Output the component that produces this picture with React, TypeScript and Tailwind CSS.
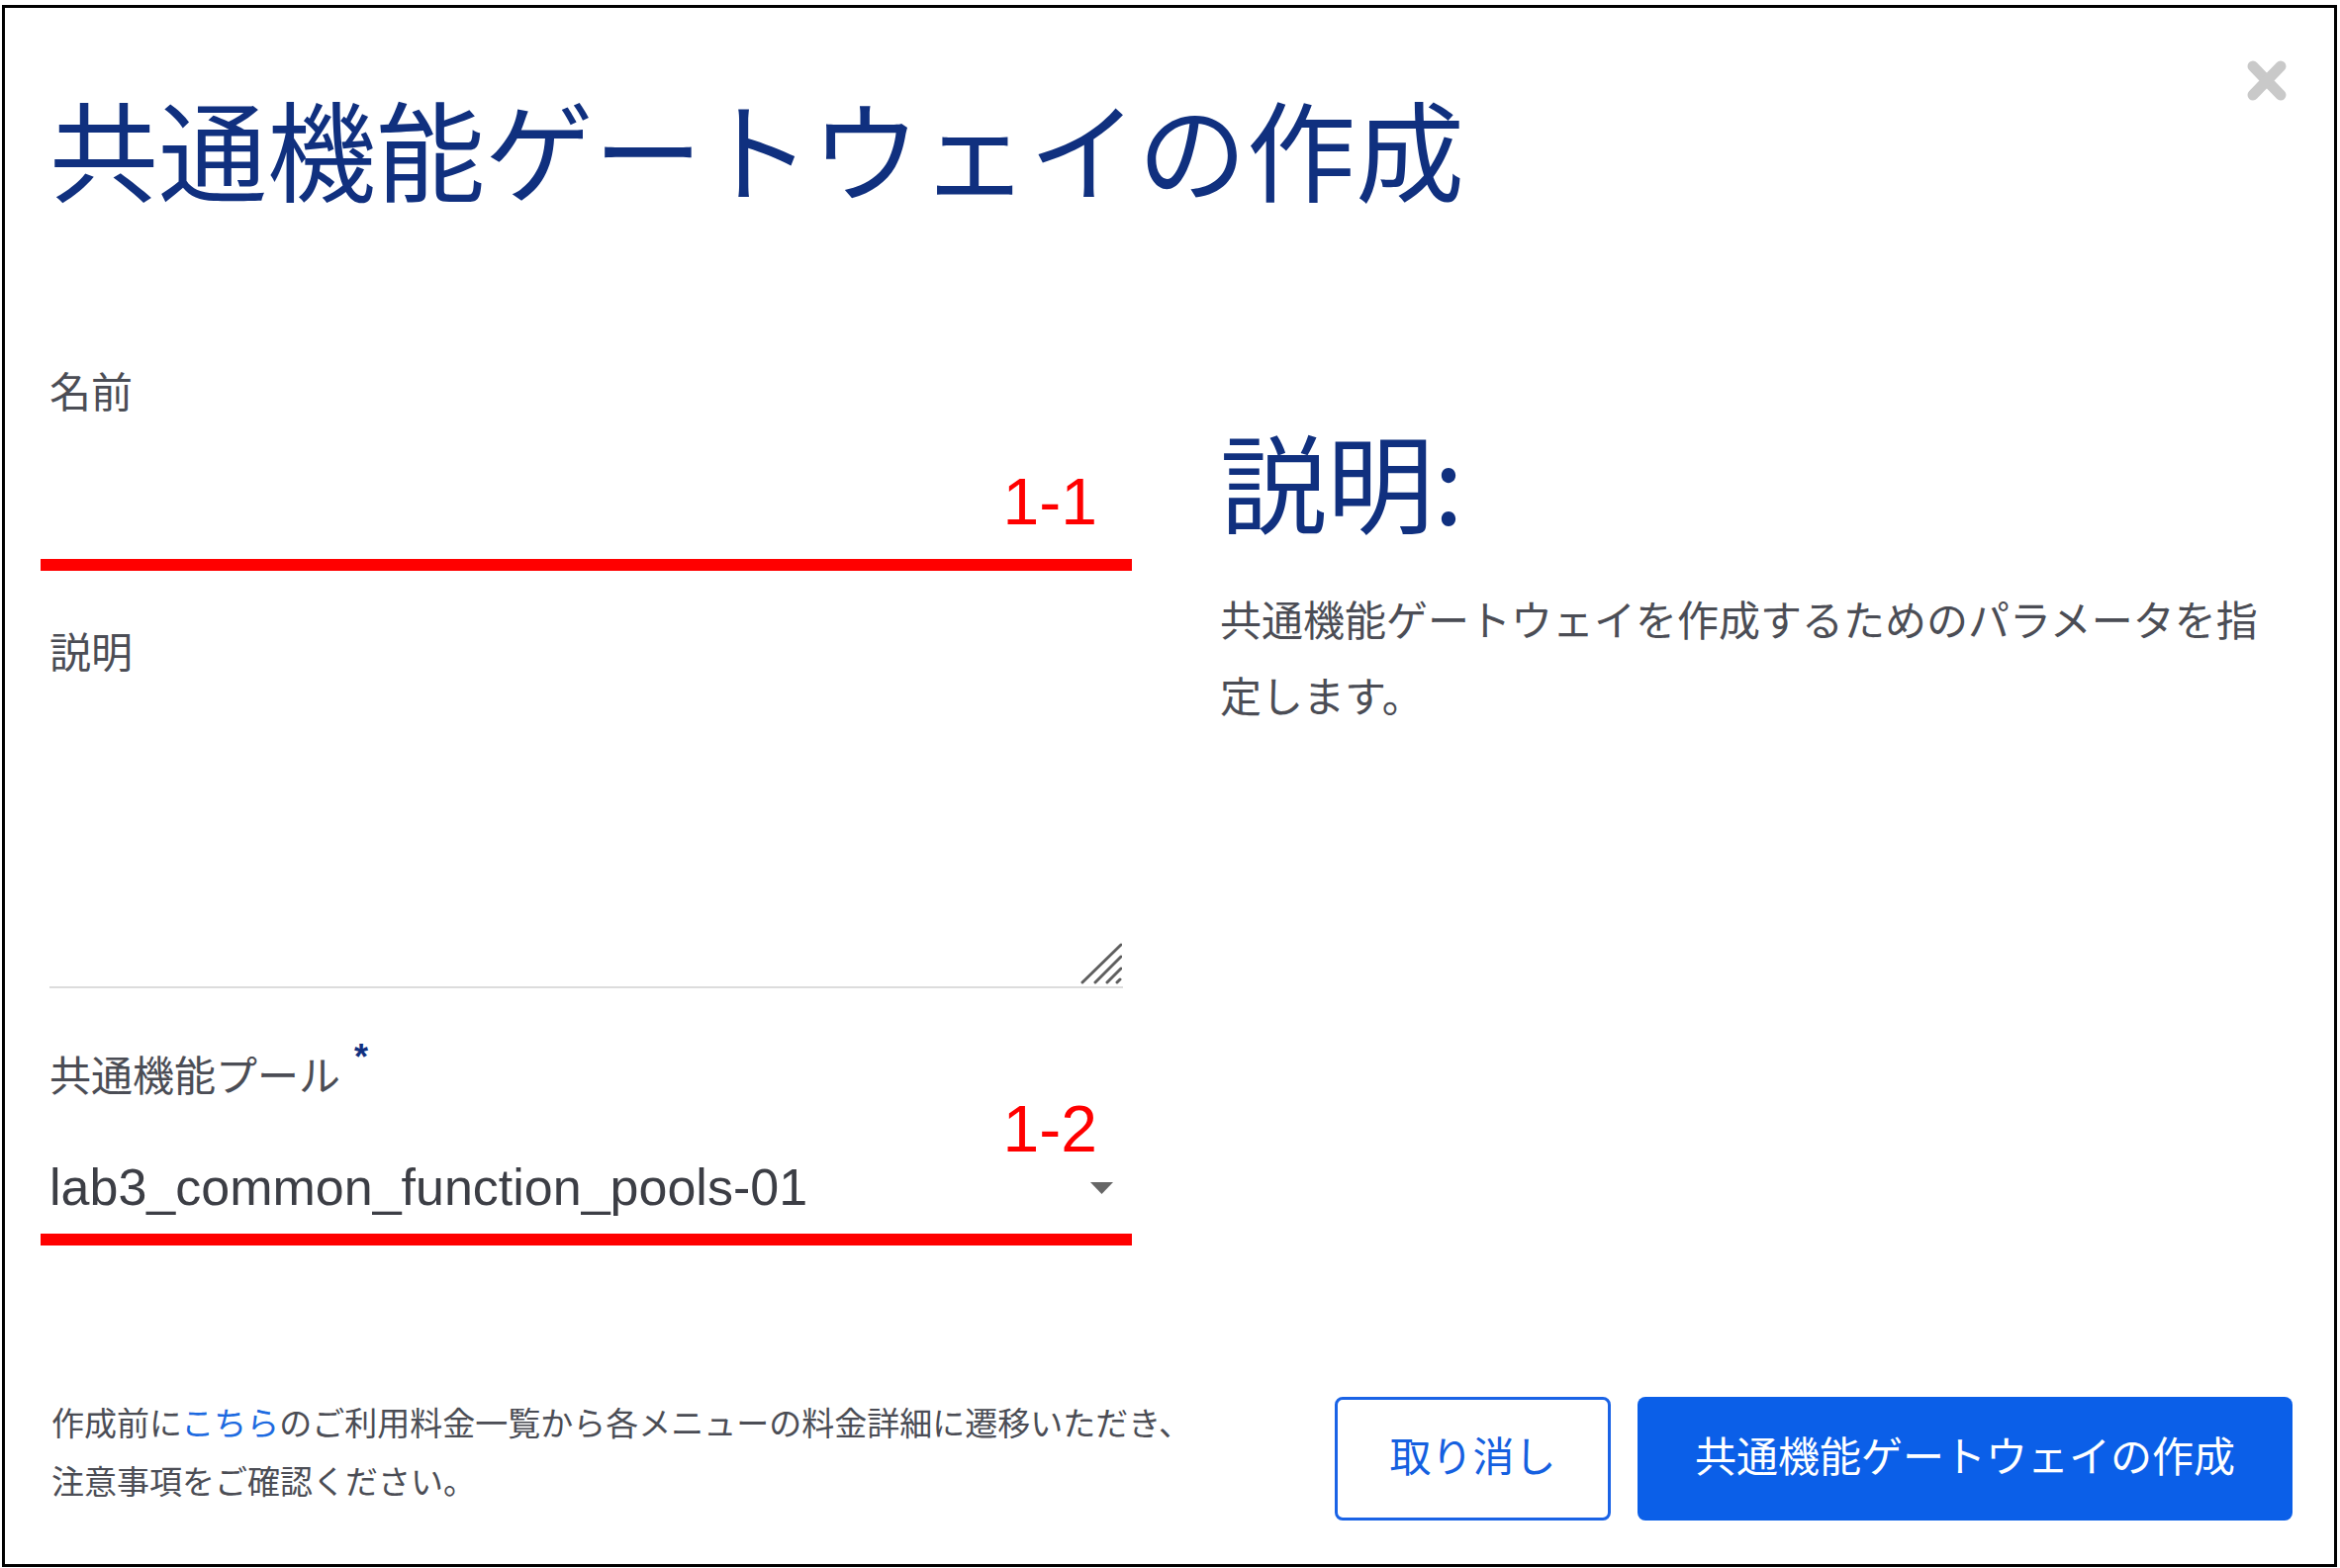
export default function App() {
  return (
    <div className="w-[2365px] h-[1585px] bg-white pt-[5px] pl-[2px] font-['Noto_Sans_CJK_JP',sans-serif]">
      <div className="relative w-[2360px] h-[1579px] border-[3px] border-black flex flex-col pl-[45px] pr-[42px] pt-[85px]">
        {/* close */}
        <div className="absolute right-[47px] top-[52px] w-[42px] h-[43px]">
          <svg viewBox="0 0 42 43" width="42" height="43">
            <line x1="7" y1="7" x2="35" y2="36" stroke="#c9c9c9" strokeWidth="11" strokeLinecap="round" />
            <line x1="35" y1="7" x2="7" y2="36" stroke="#c9c9c9" strokeWidth="11" strokeLinecap="round" />
          </svg>
        </div>

        <h1 className="text-[110px] leading-none text-[#10307f] font-normal whitespace-nowrap">
          共通機能ゲートウェイの作成
        </h1>

        <div className="flex items-start mt-[170px]">
          {/* left column */}
          <div className="w-[1085px] flex flex-col">
            <div className="text-[42px] leading-none h-[42px] text-[#4b4d55]">名前</div>
            <div className="relative h-[159px] border-b-2 border-[#dcdcdc]">
              <span className="absolute right-[26px] top-[59px] text-[66px] leading-none text-[#ff0000] font-['Liberation_Sans',Arial,sans-serif]">
                1-1
              </span>
              <div className="absolute left-[-9px] right-[-9px] bottom-[-5px] h-[12px] bg-[#ff0000]" />
            </div>

            <div className="mt-[62px] text-[42px] leading-none h-[42px] text-[#4b4d55]">説明</div>
            <div className="relative h-[321px] border-b-2 border-[#dcdcdc]">
              <svg
                className="absolute right-[1px] bottom-[2px]"
                width="42"
                height="42"
                viewBox="0 0 42 42"
              >
                <line x1="2" y1="40" x2="41" y2="2" stroke="#5f5f5f" strokeWidth="3" strokeLinecap="round" />
                <line x1="15" y1="40" x2="41" y2="14" stroke="#5f5f5f" strokeWidth="3" strokeLinecap="round" />
                <line x1="27" y1="40" x2="41" y2="26" stroke="#5f5f5f" strokeWidth="3" strokeLinecap="round" />
                <line x1="37" y1="40" x2="40" y2="37" stroke="#5f5f5f" strokeWidth="3" strokeLinecap="round" />
              </svg>
            </div>

            <div className="mt-[65px] h-[42px] flex items-start text-[#4b4d55]">
              <span className="text-[42px] leading-none">共通機能プール</span>
              <span className="relative -top-[13px] ml-[14px] text-[36px] leading-none font-bold text-[#10307f] font-['Liberation_Sans',Arial,sans-serif]">
                *
              </span>
            </div>
            <div className="relative h-[150px] border-b-2 border-[#dcdcdc] pt-[68px]">
              <span className="absolute right-[26px] top-[2px] text-[66px] leading-none text-[#ff0000] font-['Liberation_Sans',Arial,sans-serif]">
                1-2
              </span>
              <div className="text-[52px] leading-none text-[#3c3e45] font-['Liberation_Sans',Arial,sans-serif]">
                lab3_common_function_pools-01
              </div>
              <svg className="absolute right-[10px] top-[89px]" width="23" height="12" viewBox="0 0 23 12">
                <polygon points="0,0 23,0 11.5,12" fill="#666666" />
              </svg>
              <div className="absolute left-[-9px] right-[-9px] bottom-[-5px] h-[12px] bg-[#ff0000]" />
            </div>
          </div>

          {/* right column */}
          <div className="ml-[98px] w-[1084px] mt-[57px] flex flex-col">
            <h2 className="text-[108px] leading-none text-[#10307f] font-normal">説明:</h2>
            <p className="mt-[48px] w-[1070px] text-[42px] leading-[77px] text-[#4b4d55]">
              共通機能ゲートウェイを作成するためのパラメータを指定します。
            </p>
          </div>
        </div>

        {/* footer */}
        <div className="mt-[152px] flex items-center justify-between">
          <div className="pl-[2px] pb-[14px] text-[33px] leading-[59px] text-[#4b4d55]">
            <div>
              作成前に<span className="text-[#1d6ae0]">こちら</span>のご利用料金一覧から各メニューの料金詳細に遷移いただき、
            </div>
            <div>注意事項をご確認ください。</div>
          </div>
          <div className="flex items-center gap-[27px]">
            <button className="w-[279px] h-[125px] pb-[8px] rounded-[8px] border-[3px] border-[#1a63e6] bg-white text-[42px] leading-none text-[#1560e0]">
              取り消し
            </button>
            <button className="w-[662px] h-[125px] pb-[8px] rounded-[8px] bg-[#0b5fe8] text-[42px] leading-none text-white whitespace-nowrap">
              共通機能ゲートウェイの作成
            </button>
          </div>
        </div>
      </div>
    </div>
  );
}
